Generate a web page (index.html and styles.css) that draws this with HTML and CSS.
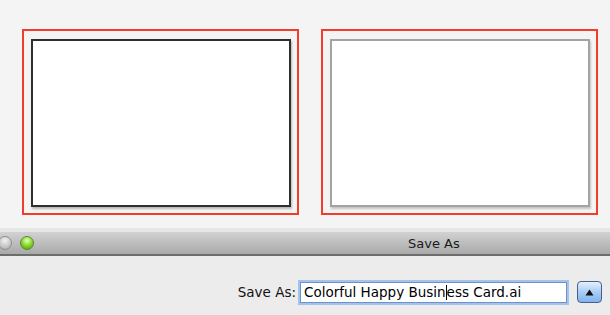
FILE: index.html
```html
<!DOCTYPE html>
<html lang="en">
<head>
  <meta charset="UTF-8">
  <meta name="viewport" content="width=device-width, initial-scale=1.0">
  <title>Save As</title>
  <link rel="stylesheet" href="styles.css">
</head>
<body>
<div class="stage">
  <div class="frame">
    <div class="card card-dark"></div>
  </div>
  <div class="frame">
    <div class="card card-light"></div>
  </div>
</div>

<div class="window">
  <div class="titlebar">
    <div class="lights">
      <span class="light light-grey"></span>
      <span class="light light-green"></span>
    </div>
    <div class="title">Save As</div>
  </div>
  <div class="panel">
    <label class="save-label">Save As:</label>
    <div class="name-field">Colorful Happy Busin<span class="caret"></span>ess Card.ai</div>
    <button class="expand" type="button">
      <svg width="9" height="7" viewBox="0 0 9 7"><path d="M4.5 0.5 L8.5 6.5 L0.5 6.5 Z" fill="#111"/></svg>
    </button>
  </div>
</div>
</body>
</html>
```

FILE: styles.css
```css
* {
  box-sizing: border-box;
}

body {
  margin: 0;
  width: 610px;
  height: 315px;
  overflow: hidden;
  font-family: "DejaVu Sans", sans-serif;
  background-color: #ececec;
}

.stage {
  height: 228px;
  background-color: #f4f4f4;
  display: flex;
  gap: 22px;
  padding: 29px 0 0 22px;
}

.frame {
  width: 277px;
  height: 186px;
  border: 2px solid #f23d2c;
  padding: 8px 6px 6px 7px;
}

.card {
  width: 260px;
  height: 168px;
  background-color: #fff;
}

.card-dark {
  border: 2px solid #2f2f2f;
  box-shadow: 1px 2px 2px rgba(0, 0, 0, 0.25);
}

.card-light {
  border: 2px solid #a3a3a3;
  box-shadow: 1px 2px 2px rgba(0, 0, 0, 0.2);
}

.window {
  height: 87px;
}

.titlebar {
  height: 28px;
  border-top: 4px solid #e6e6e6;
  background: linear-gradient(#d2d2d2, #a9a9a9);
  border-bottom: 2px solid #6d6d6d;
  display: flex;
  align-items: center;
}

.lights {
  display: flex;
  gap: 8px;
  margin-left: -2px;
}

.light {
  width: 14px;
  height: 14px;
  border-radius: 50%;
}

.light-grey {
  background: radial-gradient(circle at 50% 30%, #f2f2f2, #bdbdbd 70%, #9a9a9a);
  border: 1px solid #8e8e8e;
}

.light-green {
  background: radial-gradient(circle at 50% 30%, #e5ffc0, #7ed21c 55%, #4d9a0c);
  border: 1px solid #5a8a2a;
}

.title {
  margin-left: 374px;
  font-size: 13px;
  color: #1a1a1a;
}

.panel {
  display: flex;
  justify-content: flex-end;
  align-items: center;
  padding: 25px 8px 0 0;
}

.save-label {
  font-size: 13.5px;
  color: #111;
  margin-right: 2px;
}

.name-field {
  width: 267px;
  height: 21px;
  margin: 0 10px 0 2px;
  background-color: #fff;
  border: 1px solid #6d92c8;
  box-shadow: 0 0 0 2px #a3c3ec;
  padding-left: 3px;
  font-size: 13.5px;
  line-height: 19px;
  color: #000;
  white-space: nowrap;
}

.caret {
  display: inline-block;
  width: 0;
  height: 15px;
  border-left: 1px solid #000;
  vertical-align: -3px;
}

.expand {
  width: 25px;
  height: 22px;
  padding: 0;
  border: 1px solid #4b5d8d;
  border-radius: 4px;
  background: linear-gradient(#e4f0fd, #a9cdf5 50%, #7fb3ee);
  display: flex;
  align-items: center;
  justify-content: center;
}
```
